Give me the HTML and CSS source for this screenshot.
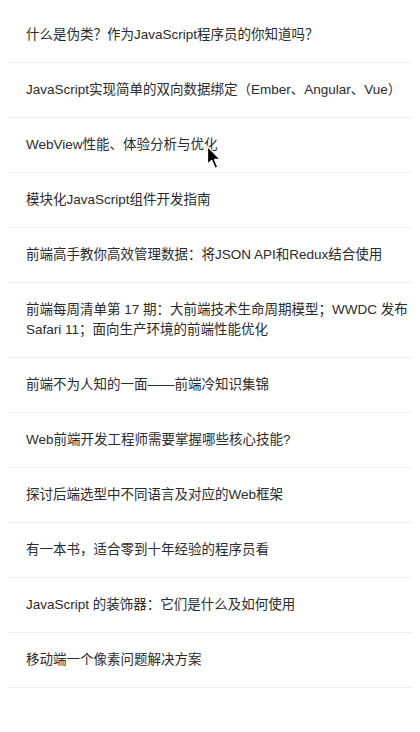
FILE: index.html
```html
<!DOCTYPE html>
<html lang="zh-CN">
<head>
<meta charset="utf-8">
<title>列表</title>
<link rel="stylesheet" href="styles.css">
</head>
<body>
<ul class="list">
  <li class="item">什么是伪类？作为JavaScript程序员的你知道吗？</li>
  <li class="item">JavaScript实现简单的双向数据绑定（Ember、Angular、Vue）</li>
  <li class="item">WebView性能、体验分析与优化</li>
  <li class="item">模块化JavaScript组件开发指南</li>
  <li class="item">前端高手教你高效管理数据：将JSON API和Redux结合使用</li>
  <li class="item">前端每周清单第 17 期：大前端技术生命周期模型；WWDC 发布 Safari 11；面向生产环境的前端性能优化</li>
  <li class="item">前端不为人知的一面——前端冷知识集锦</li>
  <li class="item">Web前端开发工程师需要掌握哪些核心技能?</li>
  <li class="item">探讨后端选型中不同语言及对应的Web框架</li>
  <li class="item">有一本书，适合零到十年经验的程序员看</li>
  <li class="item">JavaScript 的装饰器：它们是什么及如何使用</li>
  <li class="item">移动端一个像素问题解决方案</li>
</ul>
<svg class="cursor" width="17" height="26" viewBox="0 0 14 22" aria-hidden="true">
  <path d="M1 1 L1 16.5 L4.6 13.2 L7.4 19.8 L9.9 18.7 L7.1 12.2 L12 12.2 Z" fill="#000" stroke="#fff" stroke-width="1.2" stroke-linejoin="round"/>
</svg>
</body>
</html>
```

FILE: styles.css
```css
html, body {
  background: #ffffff;
}
body {
  margin: 8px;
  position: relative;
  font-family: "Liberation Sans", "Noto Sans CJK SC", sans-serif;
  color: #2b2b2b;
}
.list {
  list-style: none;
  margin: 0;
  padding: 0;
}
.item {
  font-size: 13.5px;
  line-height: 20px;
  padding: 17px 0 17px 18px;
  border-bottom: 1px solid #efefef;
}
.cursor {
  position: absolute;
  left: 198px;
  top: 137px;
}
```
